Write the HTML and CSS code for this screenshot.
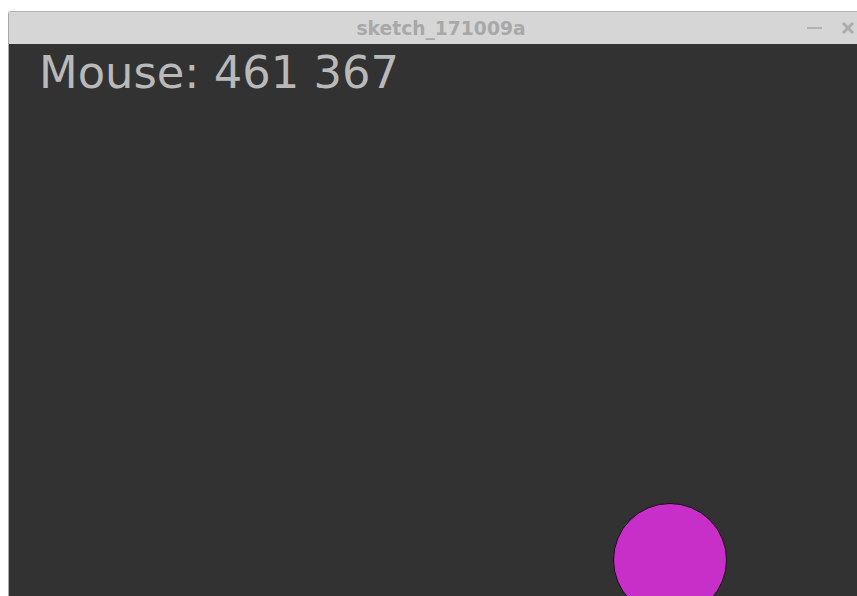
FILE: index.html
```html
<!DOCTYPE html>
<html>
<head>
<meta charset="utf-8">
<title>sketch_171009a</title>
<link rel="stylesheet" href="styles.css">
</head>
<body>
<div class="window">
  <div class="titlebar">
    <span class="title">sketch_171009a</span>
    <div class="controls">
      <span class="ctl min"></span>
      <span class="ctl close">
        <svg width="14" height="14" viewBox="0 0 14 14"><path d="M2 2 L12 12 M12 2 L2 12" stroke="#acacac" stroke-width="3" stroke-linecap="butt"/></svg>
      </span>
    </div>
  </div>
  <div class="canvas">
    <div class="readout">Mouse: 461 367</div>
    <div class="ball"></div>
  </div>
</div>
</body>
</html>
```
FILE: styles.css
```css
html, body {
  margin: 0;
  padding: 0;
  background: #ffffff;
  overflow: hidden;
  height: 100%;
}

.window {
  margin: 11px 0 0 8px;
  width: 864px;
  height: 600px;
  display: flex;
  flex-direction: column;
  border-left: 1px solid #a8a8a8;
  border-top-left-radius: 3px;
  overflow: hidden;
}

.titlebar {
  height: 32px;
  flex: none;
  background: #d6d6d6;
  border-top: 1px solid #b4b4b4;
  display: flex;
  align-items: center;
  justify-content: center;
  position: relative;
  font-family: "DejaVu Sans", sans-serif;
}

.title {
  font-weight: bold;
  font-size: 18.7px;
  color: #a8a8a8;
  margin-left: 0;
}

.controls {
  position: absolute;
  right: 18px;
  top: 0;
  height: 32px;
  display: flex;
  align-items: center;
  gap: 19px;
}

.ctl.min {
  width: 15px;
  height: 2px;
  background: #b2b2b2;
}

.ctl.close {
  display: flex;
}

.canvas {
  flex: 1;
  background: #323232;
  position: relative;
}

.readout {
  font-family: "DejaVu Sans", sans-serif;
  font-size: 44.8px;
  color: #b9b9b9;
  line-height: 1;
  padding: 7px 0 0 30px;
}

.ball {
  position: absolute;
  left: 604px;
  top: 459px;
  width: 112px;
  height: 112px;
  border-radius: 50%;
  background: #c82fc8;
  border: 1.5px solid #1a081a;
}
```
